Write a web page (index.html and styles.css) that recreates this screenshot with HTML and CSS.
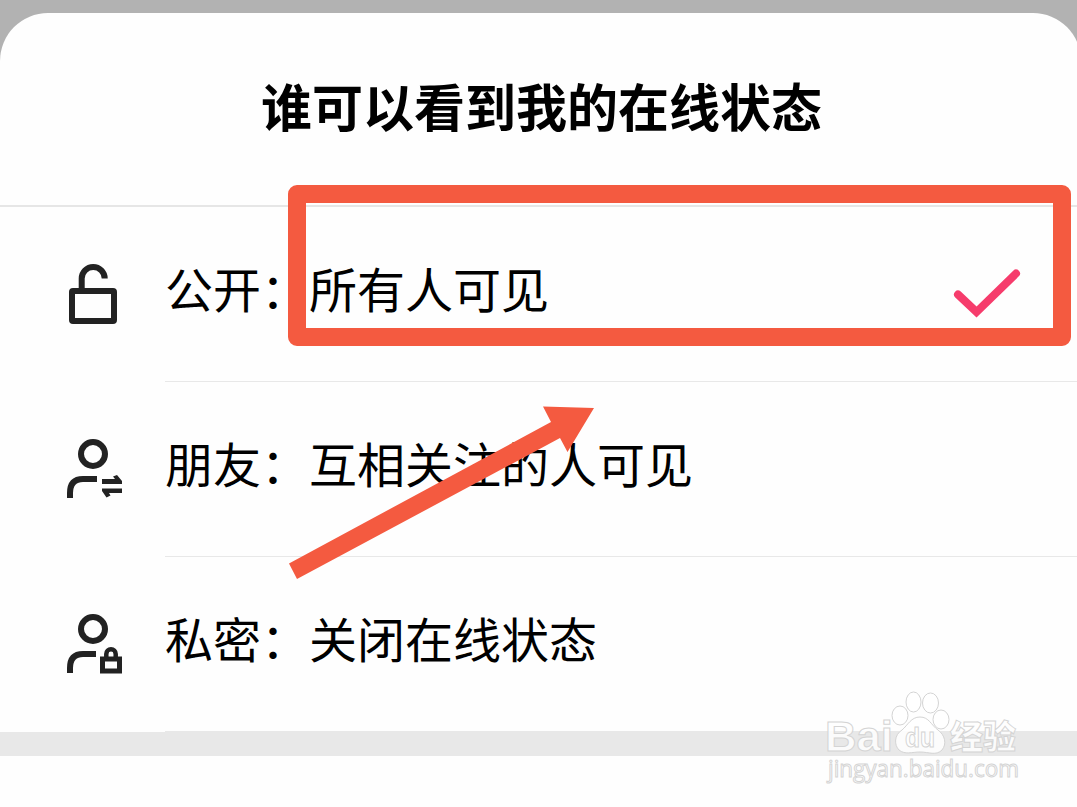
FILE: index.html
```
<!DOCTYPE html>
<html lang="zh-CN">
<head>
<meta charset="UTF-8">
<meta name="viewport" content="width=device-width, initial-scale=1.0">
<title>谁可以看到我的在线状态</title>
<link rel="stylesheet" href="styles.css">
</head>
<body>
<div class="sheet">
    <h1 class="title">谁可以看到我的在线状态</h1>
    <ul class="options">
        <li class="option">
            <svg class="icon" width="70" height="70" viewBox="0 0 70 70" fill="none" stroke="#222" stroke-width="6">
                <path d="M21.700 30V18.500a11.500 11.500 0 0 1 23 0"/>
                <rect x="12" y="31" width="42" height="30" rx="1"/>
            </svg>
            <div class="label">
                <span>公开：所有人可见</span>
                <svg class="check" width="70" height="56" viewBox="0 0 70 56" fill="none" stroke="#f63c6c" stroke-width="8" stroke-linecap="round">
                    <path d="M6 27.500L24.500 45L64 6.500"/>
                </svg>
            </div>
        </li>
        <li class="option">
            <svg class="icon" width="70" height="70" viewBox="0 0 70 70" fill="none" stroke="#222" stroke-width="6">
                <circle cx="33" cy="19" r="12"/>
                <path d="M10 63V58Q10 44 23 44H37"/>
                <path d="M42 49V44H55L53 41.500L57 40L62 46V49ZM42 53.500H62V58H49L50.500 60.500L46.500 62.500L42 56Z" fill="#222" stroke="none"/>
            </svg>
            <div class="label">朋友：互相关注的人可见</div>
        </li>
        <li class="option">
            <svg class="icon" width="70" height="70" viewBox="0 0 70 70" fill="none" stroke="#222" stroke-width="6">
                <circle cx="33" cy="19" r="12"/>
                <path d="M10 63V58Q10 44 23 44H36"/>
                <rect x="42.500" y="49" width="17" height="12" stroke-width="5"/>
                <path d="M46.300 48V44a4.700 4.700 0 0 1 9.400 0V48" stroke-width="4.500"/>
            </svg>
            <div class="label">私密：关闭在线状态</div>
        </li>
    </ul>
    <div class="divider"></div>
</div>

<!-- annotations -->
<div class="highlight"></div>
<svg class="arrow" width="310" height="180" viewBox="0 0 310 180">
    <path d="M3 163.500L265 22L257 6.500L308 8L281.500 52L274 38L11 179Z" fill="#f45a40"/>
</svg>

<svg class="watermark" width="230" height="120" viewBox="0 0 230 120">
    <g fill="#fff" fill-opacity="0.85" stroke="#d4d4d4" stroke-width="1">
        <text class="brand" x="15" y="71" textLength="68" lengthAdjust="spacingAndGlyphs">Bai</text>
        <ellipse cx="90" cy="35.500" rx="8" ry="9.500"/>
        <ellipse cx="103.500" cy="22" rx="7.500" ry="10"/>
        <ellipse cx="120.500" cy="23" rx="8" ry="10"/>
        <ellipse cx="131" cy="39.500" rx="8" ry="9.500"/>
        <path d="M110 37C101 37 98 45 92 50C84 55 84 65 89 70C95 75 102 72 110 72C119 72 126 76 132 70C137 64 135 55 128 50C121 45 119 37 110 37Z"/>
        <text class="du" x="95" y="67" textLength="30" lengthAdjust="spacingAndGlyphs">du</text>
        <text class="jingyan" x="140" y="68.500" textLength="66" lengthAdjust="spacingAndGlyphs">经验</text>
        <text class="url" x="18" y="97" textLength="191" lengthAdjust="spacingAndGlyphs">jingyan.baidu.com</text>
    </g>
</svg>
</body>
</html>
```
FILE: styles.css
```
body {
    margin: 0;
    height: 807px;
    overflow: hidden;
    position: relative;
    background-color: #b2b2b2;
    font-family: "Noto Sans CJK SC", sans-serif;
    color: #000;
}
.sheet {
    width: 1081px;
    height: 794px;
    margin-top: 13px;
    background-color: #fefefe;
    border-radius: 48px 48px 0 0;
}
.title {
    box-sizing: border-box;
    width: 1081px;
    height: 194px;
    margin: 0;
    padding-left: 2px;
    border-bottom: 2px solid #e6e6e6;
    font-size: 51px;
    font-weight: 700;
    line-height: 185px;
    text-align: center;
}
.options {
    margin: 0;
    padding: 0;
    list-style: none;
}
.option {
    display: flex;
    height: 175px;
    padding-left: 60px;
}
.icon {
    margin-top: 53px;
    margin-right: 35px;
}
.label {
    box-sizing: border-box;
    flex: 1;
    display: flex;
    justify-content: space-between;
    height: 175px;
    border-bottom: 1px solid #e8e8e8;
    font-size: 48px;
    line-height: 161px;
}
.check {
    margin-top: 60px;
    margin-right: 59px;
}
.divider {
    height: 24px;
    background-color: #e8e8e8;
}
.highlight {
    position: absolute;
    left: 288px;
    top: 185px;
    box-sizing: border-box;
    width: 783px;
    height: 161px;
    border: 18px solid #f45a40;
    border-radius: 9px;
}
.arrow {
    position: absolute;
    left: 286px;
    top: 400px;
}
.watermark {
    position: absolute;
    left: 810px;
    top: 680px;
}
.brand {
    font: bold 43px "Liberation Sans", sans-serif;
}
.du {
    font: bold 27px "Liberation Sans", sans-serif;
}
.jingyan {
    font: 900 33px "Noto Sans CJK SC", sans-serif;
}
.url {
    font: 23px "Open Sans", sans-serif;
}
```
